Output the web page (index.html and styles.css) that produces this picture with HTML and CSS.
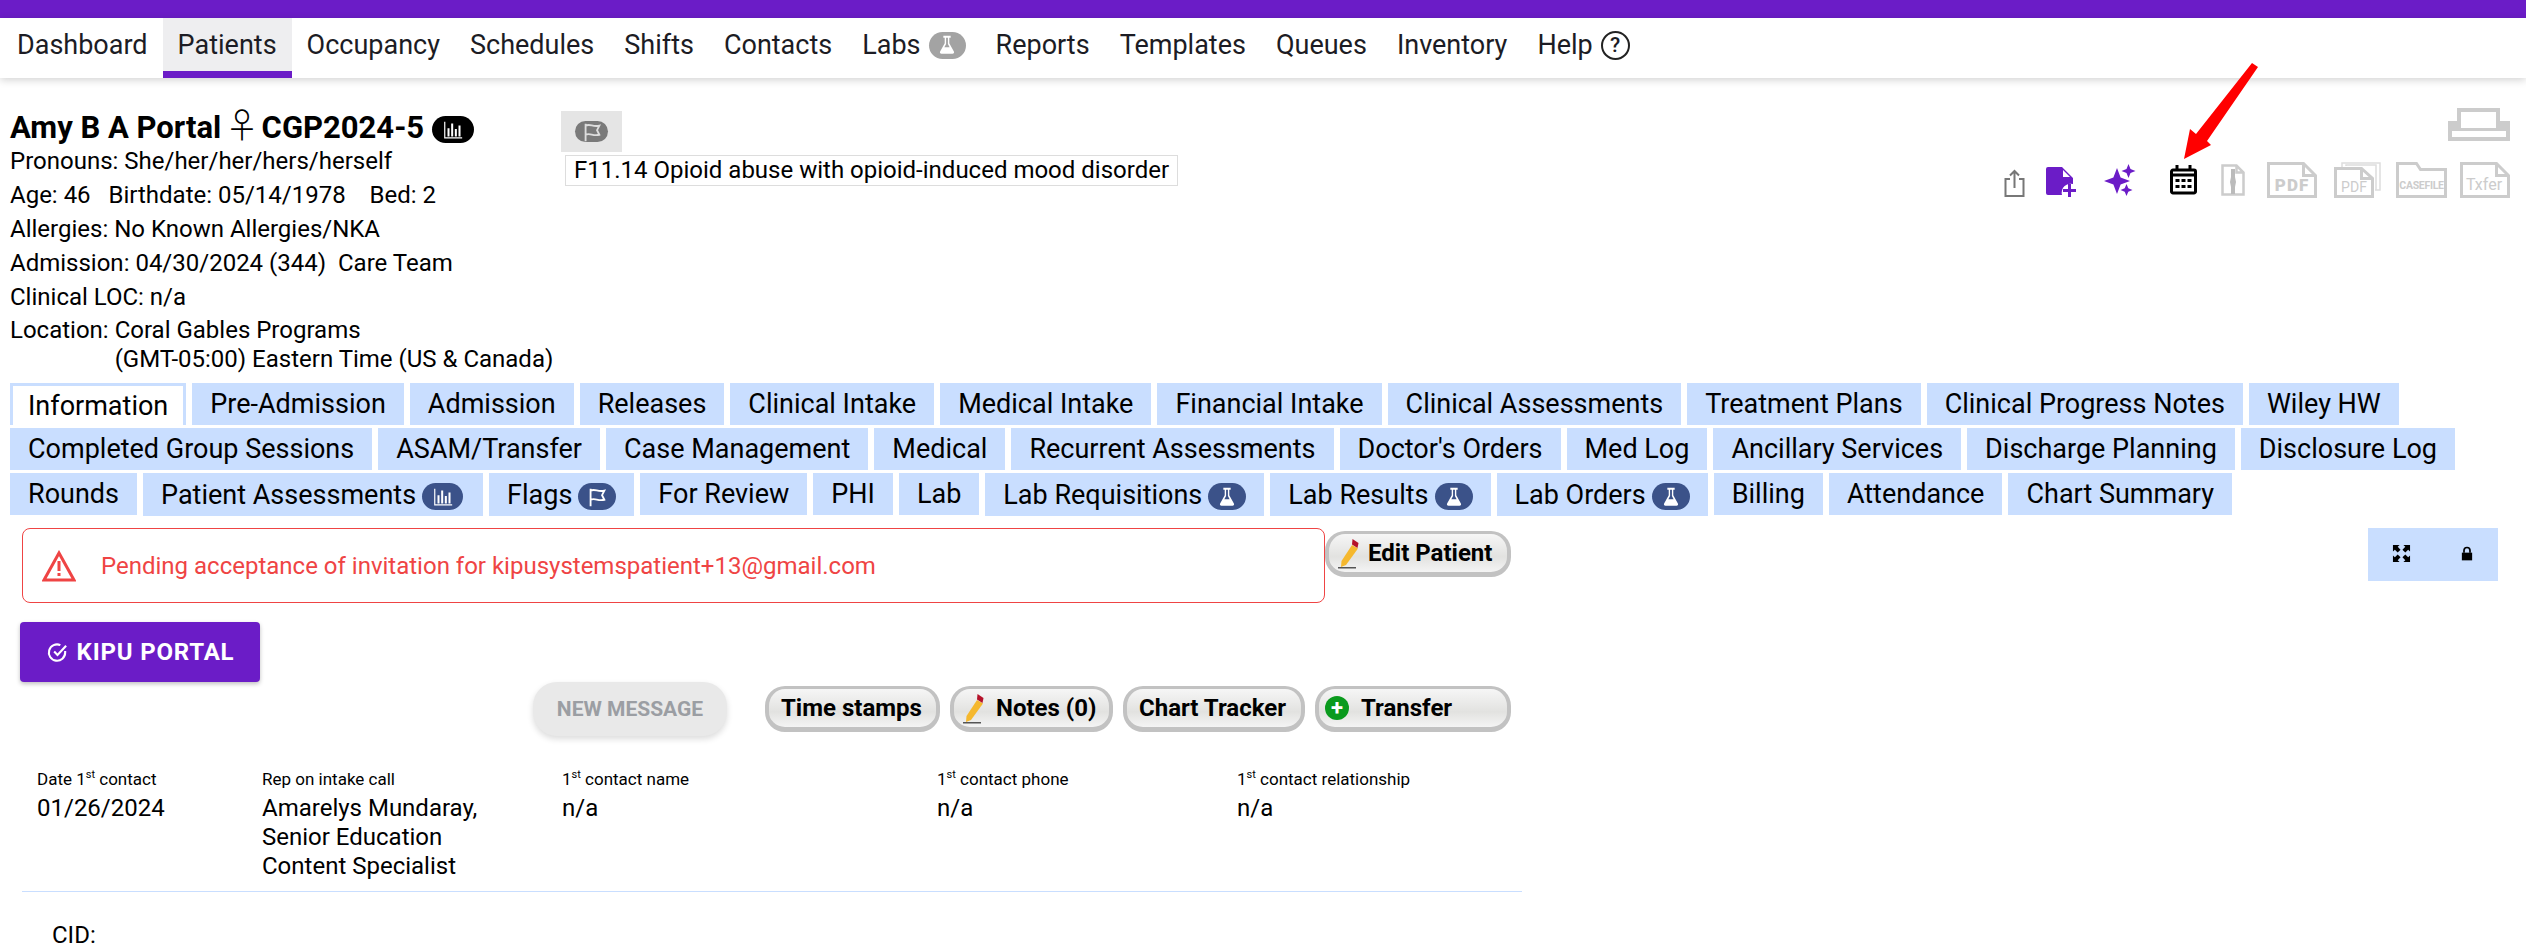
FILE: index.html
```html
<!DOCTYPE html>
<html lang="en">
<head>
<meta charset="utf-8">
<title>Amy B A Portal</title>
<link rel="stylesheet" href="styles.css">
</head>
<body>
<svg class="defs" width="0" height="0">
  <symbol id="flask" viewBox="0 0 24 24"><path fill="currentColor" fill-rule="evenodd" d="M8 2h8v2h-1.500v6l5 9c.6 1.200 0 2.500-1.500 2.500H6c-1.500 0-2.100-1.300-1.500-2.500l5-9V4H8zM11 4v7l-1.900 3.500h5.800L13 11V4z"/></symbol>
  <symbol id="chart" viewBox="0 0 24 24"><path fill="none" stroke="currentColor" stroke-width="1.300" d="M3 3v17.500h19"/><path fill="currentColor" d="M6 10h2.200v9H6zM10 5h2.200v14H10zM14 11h2.200v8H14zM18 7h2.200v12H18z"/></symbol>
  <symbol id="flag" viewBox="0 0 24 24"><path fill="none" stroke="currentColor" stroke-width="2" d="M5 3v19M5 5c5-2.500 8 2 15 0l-2.500 5 2.500 5c-7 2-10-2.500-15 0"/></symbol>
  <symbol id="pencil" viewBox="0 0 24 32"><path fill="#f5b82e" d="M15 8l6 3.500L9 28l-5 2 .5-6z"/><path fill="#b5122a" d="M15.500 2l6 4-1 5-5.500-3.500z"/><path fill="#555" d="M1 30h18v1.500H1z"/></symbol>
</svg>
<div class="topbar"></div>
<nav class="nav">
  <a class="nav-item">Dashboard</a>
  <a class="nav-item is-active">Patients</a>
  <a class="nav-item">Occupancy</a>
  <a class="nav-item">Schedules</a>
  <a class="nav-item">Shifts</a>
  <a class="nav-item">Contacts</a>
  <a class="nav-item">Labs <span class="pill pill-gray"><svg class="pill-icon"><use href="#flask"/></svg></span></a>
  <a class="nav-item">Reports</a>
  <a class="nav-item">Templates</a>
  <a class="nav-item">Queues</a>
  <a class="nav-item">Inventory</a>
  <a class="nav-item">Help <span class="help">?</span></a>
</nav>

<header class="patient">
  <div class="patient-info">
    <h1 class="patient-name">Amy B A Portal <span class="female">♀</span> CGP2024-5 <span class="pill pill-black"><svg class="pill-icon"><use href="#chart"/></svg></span></h1>
    <p>Pronouns: She/her/her/hers/herself</p>
    <p>Age: 46 &nbsp; Birthdate: 05/14/1978 &nbsp;&nbsp; Bed: 2</p>
    <p>Allergies: No Known Allergies/NKA</p>
    <p>Admission: 04/30/2024 (344) &nbsp;Care Team</p>
    <p>Clinical LOC: n/a</p>
    <div class="location"><span>Location:&nbsp;</span><span>Coral Gables Programs<br>(GMT-05:00) Eastern Time (US &amp; Canada)</span></div>
  </div>
  <div class="patient-dx">
    <div class="flag-tile"><span class="pill pill-gray2"><svg class="pill-icon"><use href="#flag"/></svg></span></div>
    <div class="dx">F11.14 Opioid abuse with opioid-induced mood disorder</div>
  </div>
  <div class="patient-tools">
    <svg class="printer" viewBox="0 0 62 33"><path fill="#ccc" fill-rule="evenodd" d="M9 0h43v13h10v20H0V13h9zM13 4v16h35V4zM4 23v6h54v-6z"/></svg>
    <div class="tool-row">
      <svg class="t-share" viewBox="0 0 21 28"><path fill="none" stroke="#777" stroke-width="2" d="M6 10H1.500v17h18V10H15M10.500 19V2M6 6.500l4.500-4.500 4.500 4.500"/></svg>
      <svg class="t-newdoc" viewBox="0 0 30 30"><path fill="#6b1cc7" d="M2 0h14l11 11v6a9 9 0 0 0-11 11H2a2 2 0 0 1-2-2V2a2 2 0 0 1 2-2z"/><path fill="#fff" d="M17 3l7 7h-7z"/><path stroke="#6b1cc7" stroke-width="3" d="M23.500 17v13M17 23.500h13"/></svg>
      <svg class="t-spark" viewBox="0 0 32 32"><path fill="#6b1cc7" d="M13 4l3.600 9.400L26 17l-9.400 3.600L13 30l-3.600-9.400L0 17l9.400-3.600zM24.500 0l2 5 5 2-5 2-2 5-2-5-5-2 5-2zM22.500 20l1.800 4.200 4.200 1.800-4.200 1.800-1.800 4.200-1.800-4.200-4.200-1.800 4.200-1.800z"/></svg>
      <svg class="t-cal" viewBox="0 0 27 30"><path fill="none" stroke="#000" stroke-width="3" d="M3 5h21a1.500 1.500 0 0 1 1.500 1.500v20A1.500 1.500 0 0 1 24 28H3a1.500 1.500 0 0 1-1.500-1.500v-20A1.500 1.500 0 0 1 3 5zM7 0v5M20 0v5M2 10h23"/><path fill="#000" d="M5.500 14h4v3h-4zM11.500 14h4v3h-4zM17.500 14h4v3h-4zM5.500 20h4v3h-4zM11.500 20h4v3h-4zM17.500 20h4v3h-4z"/></svg>
      <svg class="t-zip" viewBox="0 0 24 32"><path fill="none" stroke="#ccc" stroke-width="2.500" d="M1.500 1.500h14l7 7v22h-21zM15.500 1.500v7h7"/><path fill="#bbb" d="M10 5h4v8l1 5-1 5v7h-4v-7l-1-5 1-5z"/></svg>
      <svg class="t-doc-wide" viewBox="0 0 50 36"><path fill="none" stroke="#ccc" stroke-width="3" d="M1.500 1.500h35l12 12v21h-47zM36.500 1.500v12h12"/><text class="doc-label doc-bold" x="25" y="29" text-anchor="middle" font-size="17" letter-spacing="1">PDF</text></svg>
      <svg class="t-doc-stack" viewBox="0 0 47 36"><path fill="none" stroke="#ddd" stroke-width="1.500" d="M8 7V1h38v27h-5M12 4V3h30v25"/><path fill="#fff" stroke="#ccc" stroke-width="3" d="M1.500 6.500h26l11 10v18h-37z"/><path fill="none" stroke="#ccc" stroke-width="3" d="M27.500 6.500v10h11"/><text class="doc-label" x="20" y="30" text-anchor="middle" font-size="14">PDF</text></svg>
      <svg class="t-doc-wide t-case" viewBox="0 0 51 36"><path fill="none" stroke="#ccc" stroke-width="3" d="M1.500 1.500h19l4 6h25v27h-48z"/><text class="doc-label doc-case" x="25.500" y="27" text-anchor="middle" font-size="10.500">CASEFILE</text></svg>
      <svg class="t-doc-wide t-txfer" viewBox="0 0 50 36"><path fill="none" stroke="#ccc" stroke-width="3" d="M1.500 1.500h35l12 12v21h-47zM36.500 1.500v12h12"/><text class="doc-label" x="24" y="28" text-anchor="middle" font-size="16">Txfer</text></svg>
    </div>
  </div>
</header>

<svg class="arrow" viewBox="0 0 80 100"><path fill="#f00" d="M72 1l6 4-51 74 4 4-27 14 6-30 6 5z"/></svg>

<div class="tabs">
  <a class="tab is-current">Information</a>
  <a class="tab">Pre-Admission</a>
  <a class="tab">Admission</a>
  <a class="tab">Releases</a>
  <a class="tab">Clinical Intake</a>
  <a class="tab">Medical Intake</a>
  <a class="tab">Financial Intake</a>
  <a class="tab">Clinical Assessments</a>
  <a class="tab">Treatment Plans</a>
  <a class="tab">Clinical Progress Notes</a>
  <a class="tab">Wiley HW</a>
  <a class="tab">Completed Group Sessions</a>
  <a class="tab">ASAM/Transfer</a>
  <a class="tab">Case Management</a>
  <a class="tab">Medical</a>
  <a class="tab">Recurrent Assessments</a>
  <a class="tab">Doctor's Orders</a>
  <a class="tab">Med Log</a>
  <a class="tab">Ancillary Services</a>
  <a class="tab">Discharge Planning</a>
  <a class="tab">Disclosure Log</a>
  <a class="tab">Rounds</a>
  <a class="tab has-pill">Patient Assessments <span class="pill pill-blue pill-wide"><svg class="pill-icon"><use href="#chart"/></svg></span></a>
  <a class="tab has-pill">Flags <span class="pill pill-blue pill-narrow"><svg class="pill-icon"><use href="#flag"/></svg></span></a>
  <a class="tab">For Review</a>
  <a class="tab">PHI</a>
  <a class="tab">Lab</a>
  <a class="tab has-pill">Lab Requisitions <span class="pill pill-blue pill-narrow"><svg class="pill-icon"><use href="#flask"/></svg></span></a>
  <a class="tab has-pill">Lab Results <span class="pill pill-blue pill-narrow"><svg class="pill-icon"><use href="#flask"/></svg></span></a>
  <a class="tab has-pill">Lab Orders <span class="pill pill-blue pill-narrow"><svg class="pill-icon"><use href="#flask"/></svg></span></a>
  <a class="tab">Billing</a>
  <a class="tab">Attendance</a>
  <a class="tab">Chart Summary</a>
</div>

<section class="notice-row">
  <div class="alert">
    <svg class="alert-icon" viewBox="0 0 34 32"><path fill="none" stroke="#ef4444" stroke-width="3" d="M17 3l15 27H2z"/><path fill="#ef4444" d="M15.500 11h3v10h-3zM15.500 23h3v3h-3z"/></svg>
    <span>Pending acceptance of invitation for kipusystemspatient+13@gmail.com</span>
  </div>
  <a class="btn btn-edit"><svg class="pencil"><use href="#pencil"/></svg>Edit Patient</a>
  <div class="view-tools">
    <svg class="vt-expand" viewBox="0 0 20 20"><path fill="#000" d="M1 1h7L6 3l3 3-3 3-3-3-2 2zM19 1v7l-2-2-3 3-3-3 3-3-2-2zM1 19v-7l2 2 3-3 3 3-3 3 2 2zM19 19h-7l2-2-3-3 3-3 3 3 2-2z"/></svg>
    <svg class="vt-lock" viewBox="0 0 14 16"><path fill="#000" d="M1 7h12v9H1z"/><path fill="none" stroke="#000" stroke-width="2" d="M3.500 7V4.500a3.500 3.500 0 0 1 7 0V7"/></svg>
  </div>
</section>

<a class="btn-portal"><svg class="portal-icon" viewBox="0 0 24 24"><path fill="none" stroke="#fff" stroke-width="2.200" d="M20 10.500V12a8.500 8.500 0 1 1-5-7.700M8.500 11l3.500 3.500L21 5"/></svg>KIPU PORTAL</a>

<div class="actions">
  <a class="btn-msg">NEW MESSAGE</a>
  <a class="btn btn-stamps">Time stamps</a>
  <a class="btn btn-notes"><svg class="pencil"><use href="#pencil"/></svg>Notes (0)</a>
  <a class="btn btn-chart">Chart Tracker</a>
  <a class="btn btn-transfer"><span class="plus">+</span>Transfer</a>
</div>

<div class="fields">
  <div class="field f-date"><label>Date 1<sup>st</sup> contact</label><div>01/26/2024</div></div>
  <div class="field f-rep"><label>Rep on intake call</label><div>Amarelys Mundaray,<br>Senior Education<br>Content Specialist</div></div>
  <div class="field f-name"><label>1<sup>st</sup> contact name</label><div>n/a</div></div>
  <div class="field f-phone"><label>1<sup>st</sup> contact phone</label><div>n/a</div></div>
  <div class="field f-rel"><label>1<sup>st</sup> contact relationship</label><div>n/a</div></div>
</div>
<div class="cid">CID:</div>
</body>
</html>
```
FILE: styles.css
```css
* { box-sizing: border-box; }
html, body { margin: 0; height: 947px; overflow: hidden; background: #fff; }
body { font-family: Roboto, "Liberation Sans", sans-serif; color: #000; font-size: 24px; position: relative; }
.defs { position: absolute; }
a { color: inherit; text-decoration: none; }
p { margin: 0; }

.topbar { height: 18px; background: #6b1cc7; }
.nav { display: flex; height: 60px; padding-left: 2px; box-shadow: 0 2px 8px rgba(0,0,0,.18); font-size: 27px; color: #1c1c24; }
.nav-item { display: flex; align-items: center; gap: 8px; padding: 0 15px 6px; white-space: nowrap; }
.nav-item.is-active { background: #eeeef0; border-bottom: 7px solid #6b1cc7; padding: 0 15px; }
.help { width: 29px; height: 29px; border: 2.500px solid #222; border-radius: 50%; display: flex; align-items: center; justify-content: center; font-size: 21px; font-weight: 500; }

.pill { display: inline-flex; align-items: center; justify-content: center; border-radius: 14px; vertical-align: middle; }
.pill-icon { width: 22px; height: 22px; }
.pill-gray { width: 37px; height: 27px; background: #a3a3a3; color: #fff; }
.pill-black { width: 42px; height: 27px; background: #000; color: #fff; }
.pill-gray2 { width: 33px; height: 21px; background: #7a7a7a; color: #ddd; }
.pill-blue { width: 41px; height: 27px; background: #3b5289; color: #fff; }
.pill-blue.pill-narrow { width: 38px; }
.pill-blue.pill-wide { margin-right: 2px; }

.patient { display: flex; height: 305px; padding: 29px 10px 0; }
.patient-info { width: 551px; font-size: 24px; line-height: 34px; }
.patient-name { margin: 0; height: 37px; font-size: 31px; font-weight: 700; line-height: 34px; white-space: nowrap; }
.female { font-family: "Noto Sans CJK JP", "DejaVu Sans", sans-serif; font-weight: 300; font-size: 34px; line-height: 1; margin: 0 -5px 0 -4px; }
.location { display: flex; line-height: 29px; margin-top: 2px; }
.patient-dx { display: flex; flex-direction: column; gap: 3px; margin-top: 4px; }
.flag-tile { width: 61px; height: 41px; background: #e5e5e5; display: flex; align-items: center; justify-content: center; }
.dx { margin-left: 4px; height: 31px; border: 1px solid #ddd; padding: 0 8px; font-size: 24px; line-height: 29px; white-space: nowrap; }
.patient-tools { margin-left: auto; display: flex; flex-direction: column; align-items: flex-end; padding-top: 1px; margin-right: 6px; }
.printer { width: 62px; height: 33px; }
.tool-row { display: flex; align-items: center; margin-top: 21px; height: 36px; }
.t-share { width: 21px; height: 28px; margin-right: 21px; margin-top: 5px; }
.t-newdoc { width: 30px; height: 30px; margin-right: 28px; margin-top: 3px; }
.t-spark { width: 32px; height: 32px; margin-right: 34px; }
.t-cal { width: 27px; height: 30px; margin-right: 24px; }
.t-zip { width: 24px; height: 32px; margin-right: 22px; }
.t-doc-wide { width: 50px; height: 36px; margin-right: 17px; }
.t-doc-stack { width: 47px; height: 36px; margin-right: 15px; }
.t-case { width: 51px; margin-right: 13px; }
.t-txfer { margin-right: 0; }
.doc-label { font-family: Roboto, sans-serif; fill: #ccc; }
.doc-bold { font-weight: 900; }
.doc-case { font-weight: 700; letter-spacing: -.3px; }
.arrow { position: absolute; left: 2180px; top: 62px; width: 80px; height: 100px; }

.tabs { display: flex; flex-wrap: wrap; align-items: flex-start; gap: 3px 6px; padding: 0 10px; }
.tab { height: 42px; background: #c9deff; padding: 0 18px; display: flex; align-items: center; gap: 6px; font-size: 27px; white-space: nowrap; }
.tab.has-pill { height: 43px; }
.tab.has-pill .pill { margin-top: 4px; }
.tab.is-current { background: #fff; border: 3px solid #c9deff; border-bottom: 0; padding: 0 15px; }

.notice-row { display: flex; align-items: flex-start; padding-left: 22px; margin-top: 12px; }
.alert { width: 1303px; height: 75px; border: 1px solid #ef4444; border-radius: 8px; display: flex; align-items: center; padding-left: 19px; gap: 25px; color: #ef4444; font-size: 24px; }
.alert-icon { width: 34px; height: 32px; }
.btn { display: inline-flex; align-items: center; height: 46px; border: 4px solid #c2c2c2; border-top-width: 3px; border-bottom-width: 5px; border-radius: 20px; background: linear-gradient(#f6f6f6, #e2e2e0 60%, #f4f4f4); font-weight: 700; font-size: 24px; padding: 0 12px; white-space: nowrap; }
.pencil { width: 24px; height: 32px; margin-right: 7px; flex: none; }
.btn-edit { width: 186px; margin-top: 3px; padding: 0 8px; }
.view-tools { margin-left: auto; margin-right: 28px; width: 130px; height: 53px; background: #c9deff; display: flex; align-items: center; gap: 50px; padding: 0 0 3px 24px; }
.vt-expand { width: 19px; height: 19px; }
.vt-lock { width: 12px; height: 15px; }

.btn-portal { display: flex; align-items: center; justify-content: center; gap: 8px; width: 240px; height: 60px; margin: 19px 0 0 20px; background: #6b1cc7; color: #fff; border-radius: 4px; font-weight: 700; font-size: 24px; letter-spacing: .8px; box-shadow: 0 2px 4px rgba(0,0,0,.25); }
.portal-icon { width: 23px; height: 23px; }

.actions { display: flex; align-items: flex-start; padding-left: 533px; gap: 10px; margin-top: 0; }
.btn-msg { width: 194px; height: 54px; border-radius: 24px; background: #e9e9e9; color: #9b9ea3; font-weight: 700; font-size: 21px; display: flex; align-items: center; justify-content: center; box-shadow: 0 3px 6px rgba(0,0,0,.14); margin-right: 28px; }
.btn-stamps { width: 175px; margin-top: 4px; }
.btn-notes { width: 163px; margin-top: 4px; padding: 0 8px; }
.btn-notes .pencil { margin-right: 10px; }
.btn-chart { width: 182px; margin-top: 4px; }
.btn-transfer { width: 196px; margin-top: 4px; padding: 0 6px; }
.plus { width: 24px; height: 24px; border-radius: 50%; background: #0a9a1d; color: #fff; display: flex; align-items: center; justify-content: center; font-size: 22px; line-height: 1; margin-right: 12px; }

.fields { display: grid; grid-template-columns: 225px 300px 375px 300px 1fr; width: 1500px; height: 126px; margin: 30px 0 0 22px; padding: 0 0 0 15px; border-bottom: 1px solid #c9deff; }
.field label { display: block; font-size: 17px; line-height: 26px; }
.field sup { font-size: 11px; line-height: 0; }
.field div { font-size: 24px; line-height: 29px; margin-top: 2px; }
.cid { margin: 29px 0 0 52px; font-size: 24px; line-height: 29px; }
```
